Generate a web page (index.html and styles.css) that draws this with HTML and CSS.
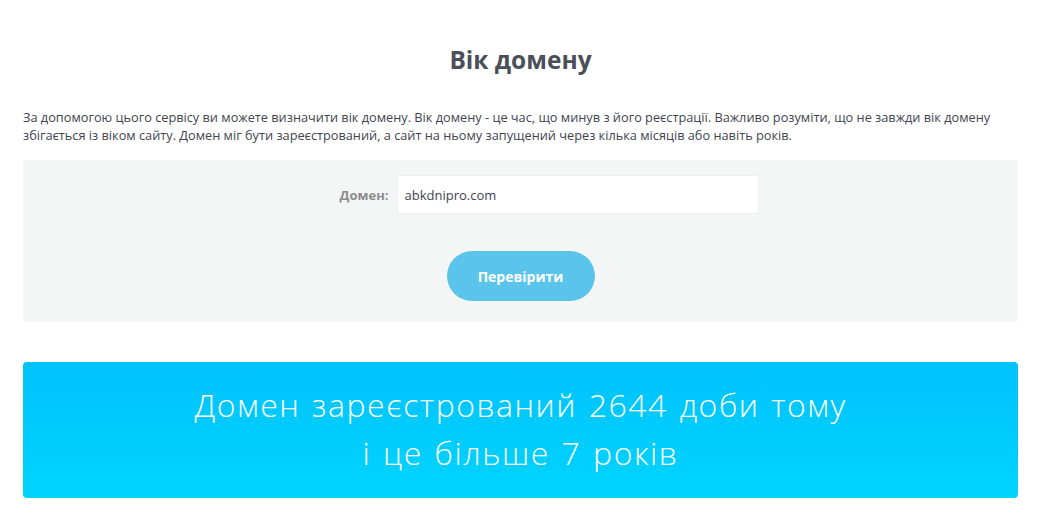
FILE: index.html
```html
<!DOCTYPE html>
<html lang="uk">
<head>
  <meta charset="UTF-8" />
  <meta name="viewport" content="width=device-width, initial-scale=1.0"/>
  <title>Вік домену</title>
  <link rel="stylesheet" href="styles.css">
</head>
<body>
  <div class="page">
    <h1 class="title">Вік домену</h1>
    <p class="intro">За допомогою цього сервісу ви можете визначити вік домену. Вік домену - це час, що минув з його реєстрації. Важливо розуміти, що не завжди вік домену збігається із віком сайту. Домен міг бути зареєстрований, а сайт на ньому запущений через кілька місяців або навіть років.</p>
    <form class="check-form" onsubmit="return false">
      <div class="field">
        <label for="domain">Домен:</label>
        <input id="domain" type="text" value="abkdnipro.com">
      </div>
      <button type="submit" class="check-btn">Перевірити</button>
    </form>
    <div class="result">
      Домен зареєстрований 2644 доби тому<br>
      і це більше 7 років
    </div>
  </div>
</body>
</html>
```

FILE: styles.css
```css
body {
  margin: 0;
  font-family: "Open Sans", sans-serif;
  color: #4a4f59;
  background: #fff;
}
.page {
  width: 995px;
  margin-left: 23px;
  padding-top: 42px;
}
.title {
  margin: 0;
  text-align: center;
  font-size: 24.5px;
  font-weight: 700;
  line-height: 36px;
  color: #4a4f59;
}
.intro {
  margin: 30px 0 16px;
  font-size: 12.75px;
  line-height: 18px;
  color: #3f4450;
}
.check-form {
  background: #f4f5f5;
  border-radius: 4px;
  padding: 15px 0 21px;
  display: flex;
  flex-direction: column;
  align-items: center;
}
.field {
  display: flex;
  align-items: center;
  gap: 9px;
  margin-left: 58px;
}
.field label {
  font-size: 13px;
  font-weight: 700;
  color: #8a8c8e;
}
.field input {
  width: 362px;
  height: 39px;
  box-sizing: border-box;
  border: 1px solid #eceeef;
  border-radius: 2px;
  background: #fff;
  padding: 0 6px;
  font-family: inherit;
  font-size: 13px;
  color: #3f4450;
}
.check-btn {
  margin-top: 37px;
  width: 148px;
  height: 50px;
  border: none;
  border-radius: 25px;
  background: #5bc4ea;
  color: #fff;
  font-family: inherit;
  font-size: 14px;
  font-weight: 700;
  cursor: pointer;
}
.result {
  margin-top: 40px;
  height: 136px;
  box-sizing: border-box;
  padding-top: 19px;
  border-radius: 4px;
  background: linear-gradient(#00c2fd, #00d4ff);
  color: #fff;
  text-align: center;
  font-size: 32px;
  font-weight: 300;
  letter-spacing: 1.5px;
  word-spacing: 2px;
  line-height: 48px;
}
```
